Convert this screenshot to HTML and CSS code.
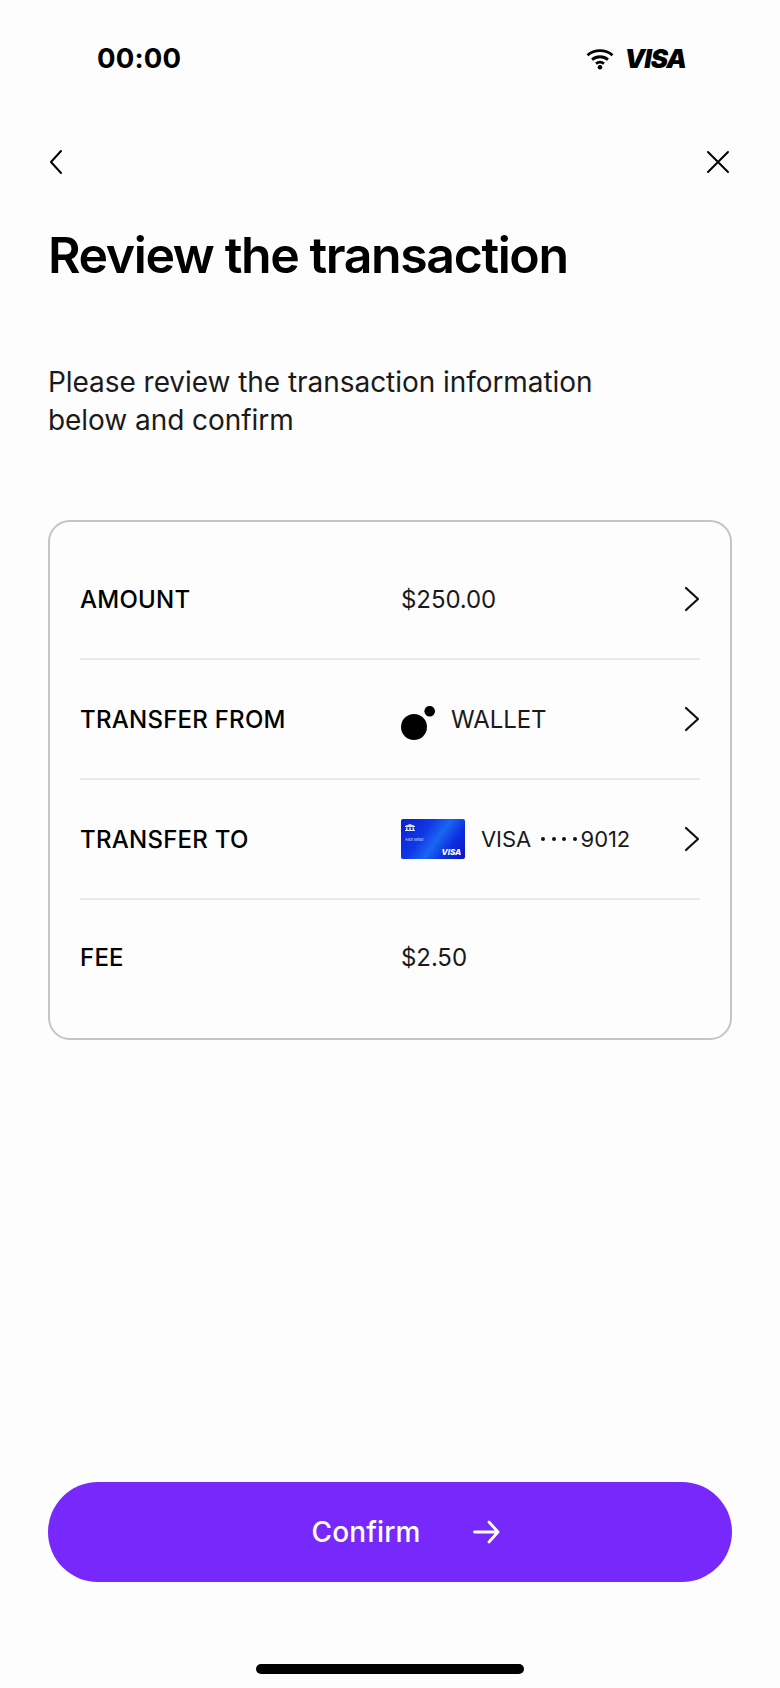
FILE: index.html
```html
<!DOCTYPE html>
<html lang="en">
<head>
<meta charset="utf-8">
<title>Review the transaction</title>
<link rel="stylesheet" href="styles.css">
</head>
<body>
<main class="screen">
  <header class="status">
    <span class="time">00:00</span>
    <div class="status-right">
      <svg class="wifi" width="28" height="22" viewBox="0 0 28 22" fill="none" stroke="#000" stroke-width="2.8" stroke-linecap="butt"><path d="M1.5 7.2C8.5 1.2 19.5 1.2 26.5 7.2"/><path d="M6 11.6C10.6 7.8 17.4 7.8 22 11.6"/><path d="M10 15.6C12.4 13.8 15.6 13.8 18 15.6"/><circle cx="14" cy="19.2" r="2.3" fill="#000" stroke="none"/></svg>
      <span class="visa-mark">VISA</span>
    </div>
  </header>
  <nav class="topnav">
    <svg width="16" height="26" viewBox="0 0 16 26" fill="none" stroke="#000" stroke-width="2" stroke-linecap="round" stroke-linejoin="round"><path d="M13 2 3 13l10 11"/></svg>
    <svg width="26" height="26" viewBox="0 0 26 26" fill="none" stroke="#000" stroke-width="2" stroke-linecap="round"><path d="M3 3l20 20M23 3 3 23"/></svg>
  </nav>
  <h1 class="title">Review the transaction</h1>
  <p class="intro">Please review the transaction information<br>below and confirm</p>
  <section class="card">
    <div class="row">
      <span class="label">AMOUNT</span>
      <div class="value">$250.00</div>
      <svg class="chev" width="16" height="26" viewBox="0 0 16 26" fill="none" stroke="#111" stroke-width="2.2" stroke-linecap="round" stroke-linejoin="round"><path d="M2 2l12 11L2 24"/></svg>
    </div>
    <div class="row">
      <span class="label">TRANSFER FROM</span>
      <div class="value">
        <svg class="dots" width="35" height="35" viewBox="0 0 35 35"><circle cx="13" cy="21" r="13" fill="#000"/><circle cx="28.700" cy="5.200" r="5.300" fill="#000"/></svg>
        <span>WALLET</span>
      </div>
      <svg class="chev" width="16" height="26" viewBox="0 0 16 26" fill="none" stroke="#111" stroke-width="2.2" stroke-linecap="round" stroke-linejoin="round"><path d="M2 2l12 11L2 24"/></svg>
    </div>
    <div class="row">
      <span class="label">TRANSFER TO</span>
      <div class="value">
        <div class="minicard">
          <svg class="bank" width="10" height="7" viewBox="0 0 10 7" fill="#dfe8ff"><path d="M0 2 5 0l5 2v1H0zM1 3.500h1.500V6H1zM4.200 3.500h1.500V6H4.200zM7.500 3.500H9V6H7.500zM0 6h10v1H0z"/></svg>
          <span class="holder">Alex Miller</span>
          <span class="minivisa">VISA</span>
        </div>
        <span class="cardname">VISA</span>
        <span class="cardnum"><i class="pin"></i><i class="pin"></i><i class="pin"></i><i class="pin"></i>9012</span>
      </div>
      <svg class="chev" width="16" height="26" viewBox="0 0 16 26" fill="none" stroke="#111" stroke-width="2.2" stroke-linecap="round" stroke-linejoin="round"><path d="M2 2l12 11L2 24"/></svg>
    </div>
    <div class="row">
      <span class="label">FEE</span>
      <div class="value">$2.50</div>
    </div>
  </section>
  <button class="confirm" type="button">
    <span>Confirm</span>
    <svg width="28" height="24" viewBox="0 0 28 24" fill="none" stroke="#fff" stroke-width="2.800" stroke-linecap="round" stroke-linejoin="round"><path d="M2.500 12H26M17 2l9 10-9 10"/></svg>
  </button>
  <div class="home-wrap"><div class="home"></div></div>
</main>
</body>
</html>
```
FILE: styles.css
```css
* { box-sizing: border-box; }
html, body { margin: 0; padding: 0; }
body { background: #fdfdfd; color: #000; font-family: Inter, "Liberation Sans", sans-serif; }
.screen { width: 780px; height: 1688px; display: flex; flex-direction: column; padding: 0 48px; overflow: hidden; }
.status { height: 116px; padding: 42px 46px 0 49px; display: flex; justify-content: space-between; align-items: flex-start; }
.time { font-size: 27.5px; line-height: 32px; font-weight: 700; letter-spacing: 0.2px; }
.status-right { display: flex; align-items: center; gap: 11px; height: 32px; margin-top: 1px; }
.visa-mark { font-size: 26px; line-height: 26px; font-weight: 900; font-style: italic; letter-spacing: -1px; }
.topnav { display: flex; justify-content: space-between; align-items: center; height: 50px; margin-top: 21px; padding-right: 1px; }
.title { margin: 33px 0 0; font-size: 50px; line-height: 70px; font-weight: 600; letter-spacing: -1.400px; }
.intro { margin: 73px 0 0; font-size: 28px; line-height: 38px; font-weight: 400; letter-spacing: -0.05px; color: #1a1a1a; }
.card { margin-top: 81px; height: 520px; border: 2px solid #c4c4c4; border-radius: 22px; padding: 18px 30px 0; }
.row { height: 120px; display: flex; align-items: center; border-bottom: 2px solid #e6e8ea; }
.row:last-child { border-bottom: 0; height: 115px; }
.label { width: 320px; font-size: 24px; font-weight: 550; letter-spacing: 0.25px; color: #000; }
.value { flex: 1; display: flex; align-items: center; font-size: 24px; font-weight: 400; letter-spacing: -0.08px; color: #1a1a1a; padding-left: 1px; }
.chev { flex: none; }
.dots { margin-right: 15px; margin-top: 9px; }
.minicard { position: relative; width: 64px; height: 40px; border-radius: 2px; margin-right: 16px; background: linear-gradient(125deg, #0b1fd0 0%, #1037e6 35%, #1a66f2 55%, #0d2ee0 75%, #0a14c4 100%); }
.bank { position: absolute; left: 4px; top: 5px; }
.holder { position: absolute; left: 4px; top: 18px; font-size: 4px; line-height: 6px; color: #cfdcff; }
.minivisa { position: absolute; right: 4px; bottom: 2px; font-size: 8px; line-height: 10px; font-weight: 800; font-style: italic; color: #fff; }
.cardname { margin-right: 10px; font-size: 22px; }
.cardnum { display: flex; align-items: center; font-size: 22px; }
.pin { width: 4px; height: 4px; border-radius: 50%; background: #111; margin-right: 6.500px; }
.pin:nth-child(4) { margin-right: 4px; }
.confirm { margin-top: auto; width: 684px; height: 100px; border: 0; border-radius: 50px; background: #7629fa; color: #fff; font-family: inherit; font-size: 28px; font-weight: 500; letter-spacing: 0.1px; display: flex; align-items: center; justify-content: center; gap: 52px; padding: 0 0 0 32px; }
.home-wrap { height: 106px; display: flex; justify-content: center; padding-top: 82px; }
.home { width: 268px; height: 10px; border-radius: 5px; background: #000; }
```
